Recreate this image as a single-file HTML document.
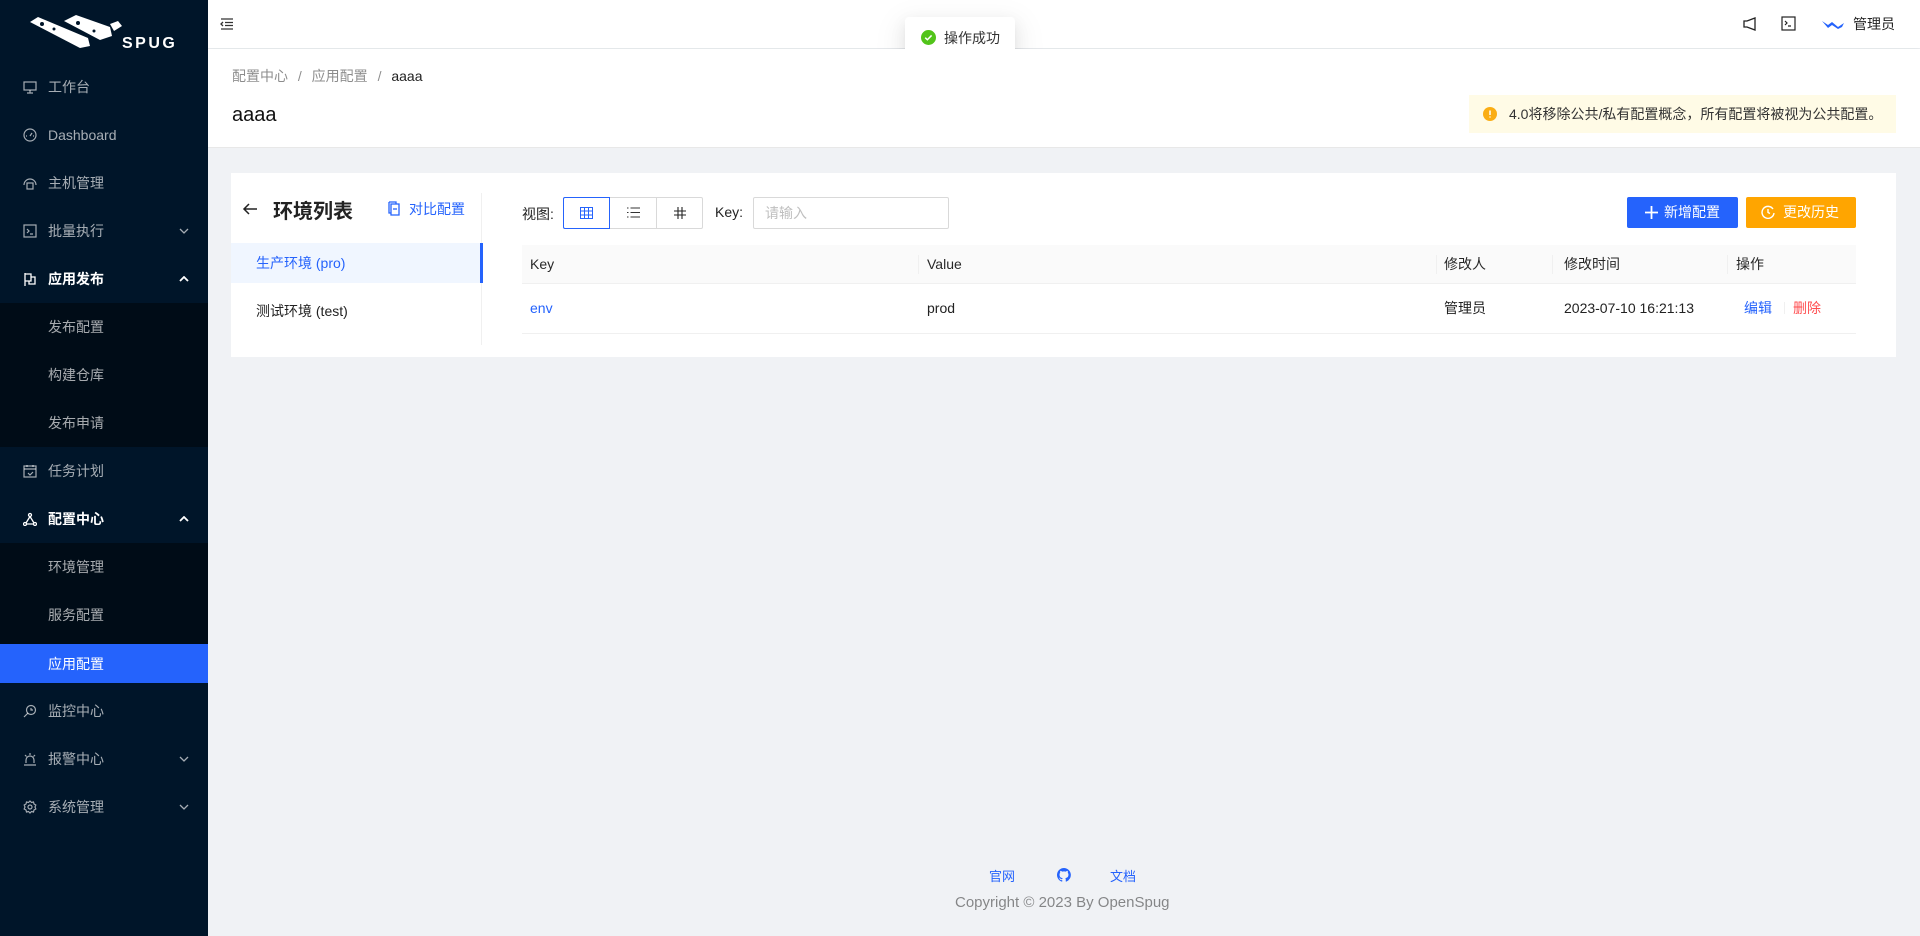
<!DOCTYPE html>
<html><head><meta charset="utf-8"><style>
*{margin:0;padding:0;box-sizing:border-box}
body{width:1920px;height:936px;overflow:hidden;background:#f0f2f5;font-family:"Liberation Sans","Noto Sans CJK SC",sans-serif;font-size:14px;color:rgba(0,0,0,.85);position:relative}
.abs{position:absolute}
#side{left:0;top:0;width:208px;height:936px;background:#001529}
.mi{position:absolute;left:0;width:208px;height:40px;line-height:40px;color:rgba(255,255,255,.65);font-size:14px}
.mi .t{position:absolute;left:48px}
.mi svg.ic{position:absolute;left:23px;top:13px}
.mi svg.ar{position:absolute;left:179px;top:17px}
.mi.open{color:#fff}
.sub{position:absolute;left:0;width:208px;background:#000c17}
#hdr{left:208px;top:0;width:1712px;height:48px;background:#fff;box-shadow:0 1px 4px rgba(0,21,41,.08)}
#ph{left:208px;top:49px;width:1712px;height:99px;background:#fff;border-bottom:1px solid #e8e8e8}
.card{left:231px;top:173px;width:1665px;height:184px;background:#fff}
.btn{position:absolute;height:31px;line-height:31px;color:#fff;font-size:14px;border-radius:2px}
.col{position:absolute;top:0;height:38px;line-height:38px}
</style></head><body>
<div id="side" class="abs">
 <svg class="abs" style="left:28px;top:14px" width="155" height="38" viewBox="0 0 155 38">
  <g fill="#fff">
   <path d="M2 8 L10 3 L60 24 L62 32 L52 34 Z"/>
   <path d="M36 7 L48 1 L82 13 L84 22 L72 26 Z"/>
   <path d="M82 10 L90 7 L94 12 L86 17 Z"/>
  </g>
  <g fill="#001529"><circle cx="14" cy="10" r="2"/><circle cx="26" cy="15" r="1.5"/><circle cx="50" cy="9" r="2"/><circle cx="66" cy="17" r="1.5"/></g>
  <text x="94" y="34" fill="#fff" font-size="16" font-weight="bold" letter-spacing="2.5" font-family="Liberation Sans,sans-serif">SPUG</text>
 </svg>
 <div class="mi" style="top:67px"><svg class="ic" width="14" height="14" viewBox="0 0 14 14" fill="none" stroke="currentColor" stroke-width="1.2"><rect x="1" y="2" width="12" height="8"/><path d="M4 13h6M7 10v3"/></svg><span class="t">工作台</span></div>
 <div class="mi" style="top:115px"><svg class="ic" width="14" height="14" viewBox="0 0 14 14" fill="none" stroke="currentColor" stroke-width="1.2"><circle cx="7" cy="7" r="6"/><path d="M7 8l2-3M3 8h1M10 8h1"/></svg><span class="t">Dashboard</span></div>
 <div class="mi" style="top:163px"><svg class="ic" width="14" height="14" viewBox="0 0 14 14" fill="none" stroke="currentColor" stroke-width="1.2"><path d="M1 9a6 6 0 0 1 12 0"/><rect x="4" y="7" width="6" height="6"/></svg><span class="t">主机管理</span></div>
 <div class="mi" style="top:211px"><svg class="ic" width="14" height="14" viewBox="0 0 14 14" fill="none" stroke="currentColor" stroke-width="1.2"><rect x="1" y="1" width="12" height="12"/><path d="M4 5l2 2-2 2M7 10h3"/></svg><span class="t">批量执行</span><svg class="ar" width="10" height="6" viewBox="0 0 10 6" fill="none" stroke="currentColor" stroke-width="1.3"><path d="M1 1l4 4 4-4"/></svg></div>
 <div class="mi open" style="top:259px"><svg class="ic" width="14" height="14" viewBox="0 0 14 14" fill="none" stroke="currentColor" stroke-width="1.3"><path d="M2 1v13M2 2h6v7H2M8 5h4v7H6v-3"/></svg><span class="t" style="font-weight:bold">应用发布</span><svg class="ar" width="10" height="6" viewBox="0 0 10 6" fill="none" stroke="currentColor" stroke-width="1.8"><path d="M1 5l4-4 4 4"/></svg></div>
 <div class="sub" style="top:303px;height:144px">
  <div class="mi" style="top:4px"><span class="t">发布配置</span></div>
  <div class="mi" style="top:52px"><span class="t">构建仓库</span></div>
  <div class="mi" style="top:100px"><span class="t">发布申请</span></div>
 </div>
 <div class="mi" style="top:451px"><svg class="ic" width="14" height="14" viewBox="0 0 14 14" fill="none" stroke="currentColor" stroke-width="1.2"><rect x="1" y="2" width="12" height="11"/><path d="M1 5h12M4 1v2M10 1v2M5 9l2 2 3-3"/></svg><span class="t">任务计划</span></div>
 <div class="mi open" style="top:499px"><svg class="ic" width="14" height="14" viewBox="0 0 14 14" fill="none" stroke="currentColor" stroke-width="1.3"><circle cx="7" cy="3" r="1.5"/><circle cx="2" cy="12" r="1.5"/><circle cx="12" cy="12" r="1.5"/><path d="M7 4.5L3 11M7 4.5l4 6.5M3.5 12h7"/></svg><span class="t" style="font-weight:bold">配置中心</span><svg class="ar" width="10" height="6" viewBox="0 0 10 6" fill="none" stroke="currentColor" stroke-width="1.8"><path d="M1 5l4-4 4 4"/></svg></div>
 <div class="sub" style="top:543px;height:101px">
  <div class="mi" style="top:4px"><span class="t">环境管理</span></div>
  <div class="mi" style="top:52px"><span class="t">服务配置</span></div>
 </div>
 <div class="mi" style="top:644px;height:39px;background:#2563fc;color:#fff"><span class="t">应用配置</span></div>
 <div class="mi" style="top:691px"><svg class="ic" width="14" height="14" viewBox="0 0 14 14" fill="none" stroke="currentColor" stroke-width="1.2"><circle cx="8" cy="6" r="4.5"/><path d="M5 9l-4 4M8 4v2h2"/></svg><span class="t">监控中心</span></div>
 <div class="mi" style="top:739px"><svg class="ic" width="14" height="14" viewBox="0 0 14 14" fill="none" stroke="currentColor" stroke-width="1.2"><path d="M3 11V8a4 4 0 0 1 8 0v3M1 13h12M7 1v2M2 3l1.5 1.5M12 3l-1.5 1.5"/></svg><span class="t">报警中心</span><svg class="ar" width="10" height="6" viewBox="0 0 10 6" fill="none" stroke="currentColor" stroke-width="1.3"><path d="M1 1l4 4 4-4"/></svg></div>
 <div class="mi" style="top:787px"><svg class="ic" width="14" height="14" viewBox="0 0 14 14" fill="none" stroke="currentColor" stroke-width="1.2"><circle cx="7" cy="7" r="2"/><path d="M7 1l1.5 1.5 2-.5.5 2 1.8 1L12 7l.8 2-1.8 1-.5 2-2-.5L7 13l-1.5-1.5-2 .5-.5-2L1.2 9 2 7l-.8-2L3 4l.5-2 2 .5z"/></svg><span class="t">系统管理</span><svg class="ar" width="10" height="6" viewBox="0 0 10 6" fill="none" stroke="currentColor" stroke-width="1.3"><path d="M1 1l4 4 4-4"/></svg></div>
</div>

<div id="hdr" class="abs">
 <svg class="abs" style="left:12px;top:18px" width="14" height="12" viewBox="0 0 14 12" fill="none" stroke="#333" stroke-width="1.3"><path d="M1 1h12M5 4.5h8M5 7.5h8M1 11h12M3 4L1 6l2 2"/></svg>
 <svg class="abs" style="left:1534px;top:16px" width="16" height="16" viewBox="0 0 16 16" fill="none" stroke="#222" stroke-width="1.3"><path d="M13 2v12L5 11H2V5h3z"/></svg>
 <svg class="abs" style="left:1573px;top:16px" width="15" height="15" viewBox="0 0 15 15" fill="none" stroke="#222" stroke-width="1.2"><rect x="1" y="1" width="13" height="13"/><path d="M4 5l2 2-2 2M7 10h3"/></svg>
 <svg class="abs" style="left:1613px;top:18px" width="24" height="12" viewBox="0 0 24 12"><path d="M1 3l6 4 4-3 6 5 6-4-2 4-4 2-6-4-4 3z" fill="#2563fc"/></svg>
 <span class="abs" style="left:1645px;top:14px;font-size:14px;color:#222">管理员</span>
</div>

<div class="abs" style="left:905px;top:17px;width:110px;height:40px;background:#fff;border-radius:4px;box-shadow:0 3px 6px -4px rgba(0,0,0,.12),0 6px 16px rgba(0,0,0,.08),0 9px 28px 8px rgba(0,0,0,.05)">
 <svg class="abs" style="left:16px;top:13px" width="15" height="15" viewBox="0 0 16 16"><circle cx="8" cy="8" r="8" fill="#52c41a"/><path d="M4.5 8.2l2.3 2.2 4.5-4.6" stroke="#fff" stroke-width="1.6" fill="none"/></svg>
 <span class="abs" style="left:39px;top:11px;color:#333">操作成功</span>
</div>

<div id="ph" class="abs">
 <div class="abs" style="left:24px;top:17px;color:rgba(0,0,0,.45)">配置中心 <span style="margin:0 6px">/</span> 应用配置 <span style="margin:0 6px">/</span> <span style="color:#222">aaaa</span></div>
 <div class="abs" style="left:24px;top:55px;font-size:20px;color:#111">aaaa</div>
 <div class="abs" style="left:1261px;top:46px;width:427px;height:38px;background:#fffbe6;line-height:38px;font-size:14px;color:#333">
  <svg class="abs" style="left:14px;top:12px" width="14" height="14" viewBox="0 0 14 14"><circle cx="7" cy="7" r="7" fill="#faad14"/><path d="M7 3.5v4.5M7 9.5v1" stroke="#fff" stroke-width="1.5"/></svg>
  <span class="abs" style="left:40px">4.0将移除公共/私有配置概念，所有配置将被视为公共配置。</span>
 </div>
</div>

<div class="card abs">
 <div class="abs" style="left:250px;top:20px;width:1px;height:152px;background:#f0f0f0"></div>
 <svg class="abs" style="left:11px;top:28px" width="16" height="16" viewBox="0 0 16 16" fill="none" stroke="#222" stroke-width="1.5"><path d="M15 8H2M7 3L2 8l5 5"/></svg>
 <span class="abs" style="left:42px;top:22px;font-size:20px;font-weight:bold;color:#222">环境列表</span>
 <svg class="abs" style="left:157px;top:28px" width="12" height="15" viewBox="0 0 12 15" fill="none" stroke="#2563fc" stroke-width="1.3"><path d="M3 3h8v11H3zM1 1h7v2M1 1v11h2"/><path d="M5 8h4"/></svg>
 <span class="abs" style="left:178px;top:26px;color:#2563fc">对比配置</span>
 <div class="abs" style="left:0;top:70px;width:252px;height:40px;background:#f0f6ff;border-right:3px solid #2563fc"></div>
 <span class="abs" style="left:25px;top:80px;color:#2563fc">生产环境 (pro)</span>
 <span class="abs" style="left:25px;top:128px;color:#222">测试环境 (test)</span>

 <span class="abs" style="left:291px;top:31px;color:#222">视图:</span>
 <div class="abs" style="left:332px;top:24px;width:140px;height:32px;border:1px solid #d9d9d9;border-radius:2px"></div>
 <div class="abs" style="left:332px;top:24px;width:47px;height:32px;border:1px solid #2563fc;border-radius:2px 0 0 2px"></div>
 <div class="abs" style="left:425px;top:24px;width:1px;height:32px;background:#d9d9d9"></div>
 <svg class="abs" style="left:349px;top:34px" width="13" height="12" viewBox="0 0 13 12" fill="none" stroke="#2563fc" stroke-width="1"><rect x=".5" y=".5" width="12" height="11"/><path d="M.5 4h12M.5 8h12M4.5 .5v11M8.5 .5v11"/></svg>
 <svg class="abs" style="left:396px;top:34px" width="13" height="11" viewBox="0 0 13 11" stroke="#333" stroke-width="1.1"><path d="M0 1h1.5M0 5.5h1.5M0 10h1.5M3.5 1H13M3.5 5.5H13M3.5 10H13"/></svg>
 <svg class="abs" style="left:443px;top:34px" width="12" height="12" viewBox="0 0 12 12" stroke="#222" stroke-width="1.1"><path d="M4 0v12M8 0v12M0 4h12M0 8h12"/></svg>
 <span class="abs" style="left:484px;top:31px;color:#222">Key:</span>
 <div class="abs" style="left:522px;top:24px;width:196px;height:32px;border:1px solid #d9d9d9;border-radius:2px;line-height:30px;padding-left:11px;color:#bfbfbf">请输入</div>

 <div class="btn" style="left:1396px;top:24px;width:111px;background:#2563fc">
  <svg class="abs" style="left:18px;top:9px" width="13" height="13" viewBox="0 0 13 13" stroke="#fff" stroke-width="1.8"><path d="M6.5 0v13M0 6.5h13"/></svg>
  <span class="abs" style="left:37px">新增配置</span></div>
 <div class="btn" style="left:1515px;top:24px;width:110px;background:#ffa500">
  <svg class="abs" style="left:15px;top:8px" width="14" height="14" viewBox="0 0 14 14" fill="none" stroke="#fff" stroke-width="1.4"><path d="M12 4A6 6 0 1 0 13 8"/><path d="M7 4v3.5l2 1"/></svg>
  <span class="abs" style="left:37px">更改历史</span></div>

 <div class="abs" style="left:291px;top:72px;width:1334px;height:111px">
  <div class="abs" style="left:0;top:0;width:1334px;height:39px;background:#fafafa;border-bottom:1px solid #f0f0f0"></div>
  <div class="abs" style="left:396px;top:10px;width:1px;height:19px;background:#f0f0f0"></div>
  <div class="abs" style="left:914px;top:10px;width:1px;height:19px;background:#f0f0f0"></div>
  <div class="abs" style="left:1030px;top:10px;width:1px;height:19px;background:#f0f0f0"></div>
  <div class="abs" style="left:1205px;top:10px;width:1px;height:19px;background:#f0f0f0"></div>
  <span class="col" style="left:8px">Key</span>
  <span class="col" style="left:405px">Value</span>
  <span class="col" style="left:922px">修改人</span>
  <span class="col" style="left:1042px">修改时间</span>
  <span class="col" style="left:1214px">操作</span>
  <div class="abs" style="left:0;top:88px;width:1334px;height:1px;background:#f0f0f0"></div>
  <span class="col" style="left:8px;top:44px;color:#2563fc">env</span>
  <span class="col" style="left:405px;top:44px;color:#222">prod</span>
  <span class="col" style="left:922px;top:44px;color:#222">管理员</span>
  <span class="col" style="left:1042px;top:44px;color:#222">2023-07-10 16:21:13</span>
  <span class="col" style="left:1222px;top:44px;color:#2563fc">编辑</span>
  <div class="abs" style="left:1262px;top:57px;width:1px;height:12px;background:#f0f0f0"></div>
  <span class="col" style="left:1271px;top:44px;color:#ff4d4f">删除</span>
 </div>
</div>

<span class="abs" style="left:989px;top:866px;color:#2563fc;font-size:13px">官网</span>
<svg class="abs" style="left:1057px;top:868px" width="14" height="14" viewBox="0 0 16 16"><path fill="#2563fc" d="M8 0a8 8 0 0 0-2.5 15.6c.4 0 .5-.2.5-.4v-1.4c-2.2.5-2.7-1-2.7-1-.4-.9-.9-1.2-.9-1.2-.7-.5.1-.5.1-.5.8.1 1.2.8 1.2.8.7 1.3 1.9.9 2.3.7.1-.5.3-.9.5-1.1-1.8-.2-3.6-.9-3.6-4 0-.9.3-1.6.8-2.1-.1-.2-.4-1 .1-2.1 0 0 .7-.2 2.2.8a7.5 7.5 0 0 1 4 0c1.5-1 2.2-.8 2.2-.8.4 1.1.2 1.9.1 2.1.5.6.8 1.3.8 2.1 0 3.1-1.9 3.7-3.6 3.9.3.3.5.8.5 1.5v2.2c0 .2.1.5.6.4A8 8 0 0 0 8 0z"/></svg>
<span class="abs" style="left:1110px;top:866px;color:#2563fc;font-size:13px">文档</span>
<span class="abs" style="left:955px;top:894px;color:rgba(0,0,0,.45);font-size:15px">Copyright © 2023 By OpenSpug</span>
</body></html>
